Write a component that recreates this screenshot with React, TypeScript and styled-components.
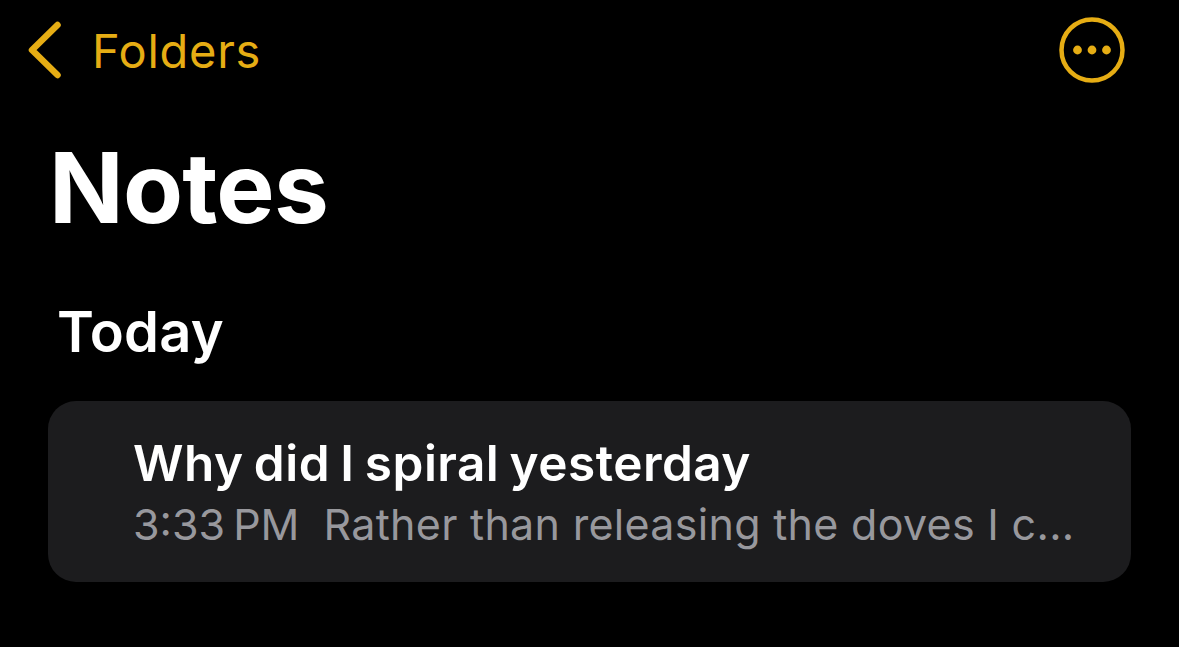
import React from 'react'
import styled, { createGlobalStyle } from 'styled-components'

const GlobalStyle = createGlobalStyle`
  html, body {
    margin: 0;
    padding: 0;
    background: #000;
  }
  body {
    font-family: Inter, "Liberation Sans", sans-serif;
  }
`

const Screen = styled.div`
  width: 1179px;
  height: 647px;
  background: #000;
  overflow: hidden;
  box-sizing: border-box;
  padding: 16px 48px 0;
  display: flex;
  flex-direction: column;
`

const NavBar = styled.div`
  display: flex;
  align-items: center;
  justify-content: space-between;
  height: 68px;
  margin: 0 6px 0 -20px;
`

const BackLink = styled.div`
  display: flex;
  align-items: center;
  gap: 31px;
  color: #e6ad14;
  font-size: 47px;
  letter-spacing: 0.7px;
`

const Title = styled.h1`
  margin: 48px 0 0 1px;
  color: #fff;
  font-size: 98px;
  line-height: 112px;
  font-weight: 700;
  letter-spacing: -0.8px;
`

const SectionTitle = styled.h2`
  margin: 54px 0 0 9px;
  color: #fff;
  font-size: 56px;
  line-height: 68px;
  font-weight: 600;
  letter-spacing: 0.2px;
`

const NoteCard = styled.div`
  margin-top: 35px;
  height: 181px;
  background: #1c1c1e;
  border-radius: 28px;
  box-sizing: border-box;
  padding: 33px 56px 0 85px;
`

const NoteTitle = styled.div`
  color: #fff;
  font-size: 49.5px;
  line-height: 58px;
  font-weight: 600;
  letter-spacing: 0.47px;
  word-spacing: -2.6px;
  white-space: nowrap;
`

const NoteMeta = styled.div`
  display: flex;
  gap: 24px;
  margin-top: 5px;
  color: #98989d;
  font-size: 43px;
  line-height: 54px;
  white-space: nowrap;
`

const NoteTime = styled.span`
  word-spacing: -4px;
`

const NotePreview = styled.span`
  letter-spacing: 0.3px;
`

export default function App() {
  return (
    <>
      <GlobalStyle />
      <Screen>
        <NavBar>
          <BackLink>
            <svg width="33" height="58" viewBox="0 0 33 58" fill="none">
              <path d="M29.5 4 L4 29 L29.5 54" stroke="#e6ad14" strokeWidth="6.5" strokeLinecap="round" strokeLinejoin="round" />
            </svg>
            <span>Folders</span>
          </BackLink>
          <svg width="66" height="66" viewBox="0 0 66 66" fill="none">
            <circle cx="33" cy="33" r="30.5" stroke="#e6ad14" strokeWidth="4.5" />
            <circle cx="18.5" cy="33" r="4.4" fill="#e6ad14" />
            <circle cx="33" cy="33" r="4.4" fill="#e6ad14" />
            <circle cx="47.5" cy="33" r="4.4" fill="#e6ad14" />
          </svg>
        </NavBar>
        <Title>Notes</Title>
        <SectionTitle>Today</SectionTitle>
        <NoteCard>
          <NoteTitle>Why did I spiral yesterday</NoteTitle>
          <NoteMeta>
            <NoteTime>3:33 PM</NoteTime>
            <NotePreview>Rather than releasing the doves I c...</NotePreview>
          </NoteMeta>
        </NoteCard>
      </Screen>
    </>
  )
}
